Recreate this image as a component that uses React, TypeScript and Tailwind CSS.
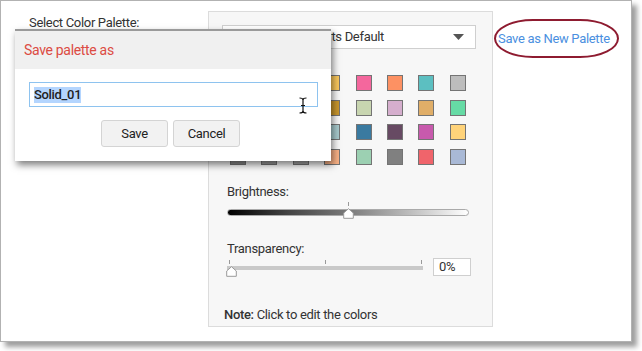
import React from 'react'

const font = { fontFamily: 'Roboto, Lato, Arial, sans-serif' }

const swatches = [
  ['#9e9e9e', '#c5c5c5', '#e2e2e2', '#f9c75c', '#f4679d', '#fd9163', '#5cbfc1', '#bdbdbd'],
  ['#8e8e8e', '#a9a9a9', '#d0d0d0', '#c8962d', '#c8d5b0', '#d5aecd', '#e0ae68', '#66dba5'],
  ['#7f7f7f', '#b8b8b8', '#9fb3b5', '#a7c9cc', '#3a7aa0', '#674a63', '#c85aad', '#ffd37a'],
  ['#8a8a8a', '#9a9a9a', '#a3a3a3', '#f9b185', '#9cd0b2', '#808080', '#f0646b', '#a9b9d6'],
]

function Thumb() {
  return (
    <svg width="11" height="11" viewBox="0 0 11 11">
      <path d="M5.5 0.7 L10.3 5 L10.3 10.3 L0.7 10.3 L0.7 5 Z" fill="#fff" stroke="#9a9a9a" strokeWidth="1" />
    </svg>
  )
}

export default function App() {
  return (
    <div className="relative w-[642px] h-[351px] bg-white text-[#333] tracking-[-0.32px]" style={font}>
      <div className="flex w-[632px] h-[342px] border border-[#b2b2b2] bg-white shadow-[5px_5px_5px_rgba(0,0,0,0.38)]">
        <div className="w-[207px] pl-[28px] pt-[13px] text-[13px] leading-[18px]">Select Color Palette:</div>

        <div className="mt-[10px] w-[285px] h-[316px] border border-[#dcdcdc] bg-[#f7f7f7] pl-[13px] pt-[13px] flex flex-col">
          <div className="w-[254px] h-[24px] border border-[#cfcfcf] bg-white flex items-center pr-[11px] text-[13px]">
            <div className="w-[161px] text-right whitespace-nowrap">Zoho Reports Default</div>
            <svg className="ml-auto" width="11" height="6" viewBox="0 0 11 6">
              <path d="M0 0 L11 0 L5.5 6 Z" fill="#555" />
            </svg>
          </div>

          <div className="mt-[26px] ml-[8px] grid grid-cols-[repeat(8,16px)] gap-x-[15.4px] gap-y-[8.5px]">
            {swatches.flat().map((c, i) => (
              <div key={i} className="w-4 h-4 border-[1.5px] border-[#747474]" style={{ background: c }} />
            ))}
          </div>

          <div className="mt-[18px] ml-[5px] text-[13px] leading-[18px]">Brightness:</div>
          <div className="relative ml-[5px] w-[242px] h-[20px]">
            <div className="absolute left-[121px] top-[1px] w-px h-[4px] bg-[#999]" />
            <div className="absolute left-0 top-[8px] w-full h-[7px] rounded-full border border-[#aaa] bg-[linear-gradient(to_right,#000_0%,#444_25%,#7a7a7a_50%,#bbb_75%,#fff_100%)]" />
            <div className="absolute left-[116px] top-[7px] leading-none">
              <Thumb />
            </div>
          </div>

          <div className="mt-[19px] ml-[5px] text-[13px] leading-[18px]">Transparency:</div>
          <div className="flex ml-[5px] mt-[1px]">
            <div className="relative w-[196px] h-[20px]">
              <div className="absolute left-[2px] top-[1px] w-px h-[4px] bg-[#999]" />
              <div className="absolute left-[98px] top-[1px] w-px h-[4px] bg-[#999]" />
              <div className="absolute left-[194px] top-[1px] w-px h-[4px] bg-[#999]" />
              <div className="absolute left-0 top-[7px] w-full h-[4px] bg-[#c9c9c9]" />
              <div className="absolute left-[-1px] top-[7px] leading-none">
                <Thumb />
              </div>
            </div>
            <div className="ml-[10px] -mt-[1px] w-[38px] h-[18px] border border-[#cfcfcf] bg-white pl-[5px] text-[13px] leading-[16px]">0%</div>
          </div>

          <div className="mt-[27px] ml-[2px] text-[13px] leading-[18px]">
            <span className="font-medium">Note:</span> Click to edit the colors
          </div>
        </div>

        <div className="ml-px mt-[18px]">
          <div className="w-[125px] h-[39px] border-2 border-[#8e1b30] rounded-[40px/20px] flex items-center pl-[2px] text-[13px] text-[#4a8fe0] whitespace-nowrap">
            Save as New Palette
          </div>
        </div>
      </div>

      <div className="absolute left-[15px] top-[29px] w-[316px] h-[132px] bg-white border-t-2 border-[#9a9a9a] shadow-[2px_4px_7px_rgba(0,0,0,0.5)] flex flex-col">
        <div className="h-[38px] bg-[#f0f0f0] flex items-center pl-[9px] text-[14px] text-[#dc4b43]">Save palette as</div>
        <div className="mt-[13px] ml-[14px] w-[289px] h-[25px] border border-[#8ec3ef] flex items-center pl-[4px] text-[13px]">
          <span className="bg-[#b4d5fe] leading-[16px] text-[#222] font-medium">Solid_01</span>
        </div>
        <div className="mt-[13px] ml-[86px] flex gap-[5px]">
          <button className="w-[67px] h-[27px] rounded-[3px] border border-[#d4d4d4] bg-[#f2f2f2] text-[13px] text-[#222]">Save</button>
          <button className="w-[67px] h-[27px] rounded-[3px] border border-[#d4d4d4] bg-[#f2f2f2] text-[13px] text-[#222]">Cancel</button>
        </div>
      </div>

      <svg className="absolute left-[298px] top-[97px]" width="10" height="17" viewBox="0 0 10 17">
        <path d="M1.5 1 Q5 1 5 3 Q5 1 8.5 1 M5 3 L5 14 M1.5 16 Q5 16 5 14 Q5 16 8.5 16 M3 8.5 L7 8.5" fill="none" stroke="#111" strokeWidth="1.2" />
      </svg>
    </div>
  )
}
